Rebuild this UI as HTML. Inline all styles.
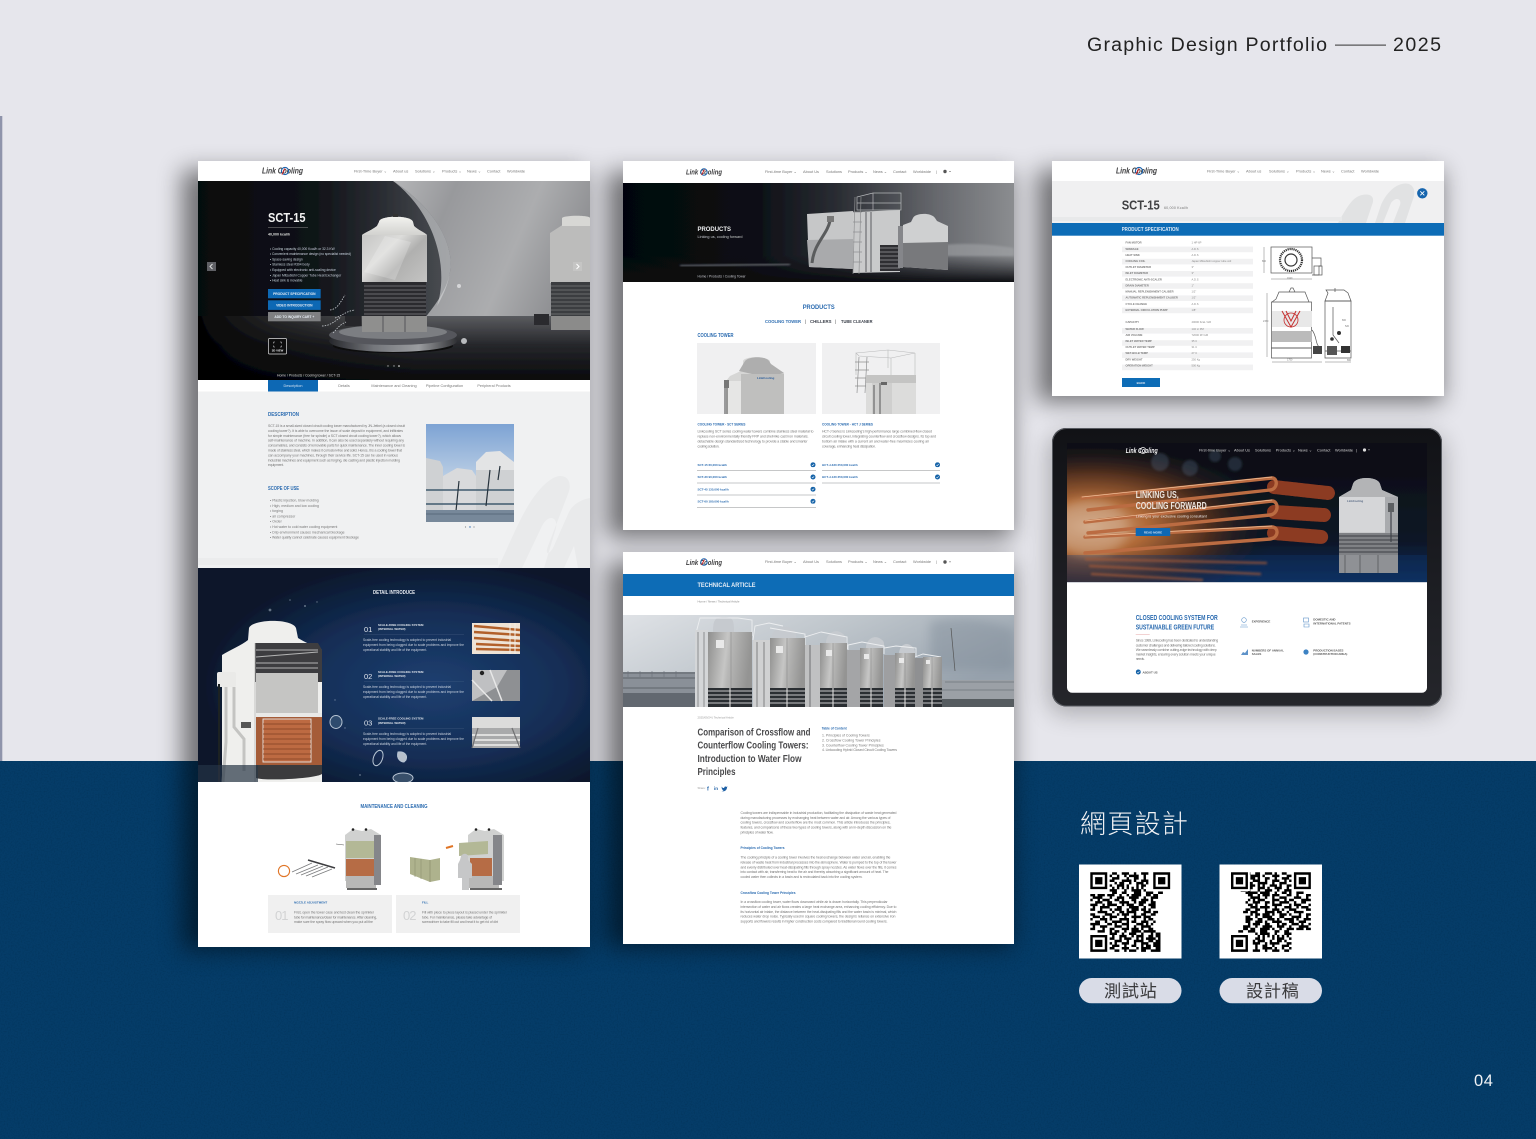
<!DOCTYPE html>
<html lang="zh-Hant">
<head>
<meta charset="utf-8">
<title>Graphic Design Portfolio 2025</title>
<style>
html,body{margin:0;padding:0;background:#e6e6ec;width:1536px;height:1139px;overflow:hidden}
svg{display:block}
text{font-family:"Liberation Sans","Noto Sans CJK TC",sans-serif}
.n{font-family:"Liberation Sans Narrow","Liberation Sans",sans-serif;font-weight:700}
.nav{font-size:3.9px;fill:#777}
.p{font-size:3.5px;fill:#777}
.w{font-size:3.3px;fill:#c9d2de}
.b{fill:#2a6bb0}
</style>
</head>
<body>
<svg width="1536" height="1139" viewBox="0 0 1536 1139" xmlns="http://www.w3.org/2000/svg">
<defs>
<filter id="sh" x="-30%" y="-30%" width="160%" height="160%"><feGaussianBlur stdDeviation="12"/></filter>
<filter id="sm" x="-10%" y="-10%" width="120%" height="120%"><feGaussianBlur stdDeviation="0.35"/></filter>
<filter id="b1" x="-20%" y="-20%" width="140%" height="140%"><feGaussianBlur stdDeviation="1"/></filter>
<filter id="b3" x="-30%" y="-30%" width="160%" height="160%"><feGaussianBlur stdDeviation="5"/></filter>
<filter id="noise" x="0" y="0" width="100%" height="100%"><feTurbulence type="fractalNoise" baseFrequency=".7" numOctaves="2" seed="4"/><feColorMatrix values="0 0 0 0 0  0 0 0 0 0  0 0 0 0 0  0 0 0 1.1 -.52"/></filter>
<linearGradient id="h1" x1="0" x2="1" y1="0" y2="0"><stop offset="0" stop-color="#06080c"/><stop offset=".3" stop-color="#101318"/><stop offset=".48" stop-color="#2c2f35"/><stop offset=".66" stop-color="#4f5257"/><stop offset="1" stop-color="#55585d"/></linearGradient>
<linearGradient id="h1b" x1="0" x2="1" y1="0" y2=".3"><stop offset="0" stop-color="#b5b6b8"/><stop offset=".3" stop-color="#98999c"/><stop offset=".7" stop-color="#acadaf"/><stop offset="1" stop-color="#8f9093"/></linearGradient>
<linearGradient id="fl" x1="0" x2="0" y1="0" y2="1"><stop offset="0" stop-color="#5a5b5f"/><stop offset=".45" stop-color="#26272b"/><stop offset="1" stop-color="#08090c"/></linearGradient>
<linearGradient id="fl2" x1="0" x2="1" y1="0" y2="0"><stop offset="0" stop-color="#000" stop-opacity=".95"/><stop offset=".35" stop-color="#000" stop-opacity=".55"/><stop offset="1" stop-color="#000" stop-opacity="0"/></linearGradient>
<linearGradient id="tw" x1="0" x2="1" y1="0" y2="1"><stop offset="0" stop-color="#bdbdbc"/><stop offset=".45" stop-color="#dcdcda"/><stop offset=".65" stop-color="#b0b0af"/><stop offset="1" stop-color="#c4c4c3"/></linearGradient>
<linearGradient id="cap" x1="0" x2="0" y1="0" y2="1"><stop offset="0" stop-color="#f2f2ef"/><stop offset="1" stop-color="#d2d2cf"/></linearGradient>
<linearGradient id="plat" x1="0" x2="1" y1="0" y2="0"><stop offset="0" stop-color="#26272b"/><stop offset=".35" stop-color="#74767b"/><stop offset=".7" stop-color="#9b9da0"/><stop offset="1" stop-color="#303135"/></linearGradient>
<radialGradient id="blu" cx=".6" cy=".55" r=".6"><stop offset="0" stop-color="#1d3f70"/><stop offset=".55" stop-color="#142e56"/><stop offset="1" stop-color="#091629"/></radialGradient>
<linearGradient id="h2" x1="0" x2="1" y1="0" y2="0"><stop offset="0" stop-color="#04060c"/><stop offset=".32" stop-color="#090c13"/><stop offset=".55" stop-color="#2a2d33"/><stop offset=".8" stop-color="#66686d"/><stop offset="1" stop-color="#8b8d90"/></linearGradient>
<linearGradient id="h2f" x1="0" x2="0" y1="0" y2="1"><stop offset="0" stop-color="#0a0c12" stop-opacity="0"/><stop offset="1" stop-color="#08090d" stop-opacity=".95"/></linearGradient>
<linearGradient id="sky" x1="0" x2="1" y1="0" y2=".5"><stop offset="0" stop-color="#dfe2e6"/><stop offset=".5" stop-color="#bec5cb"/><stop offset="1" stop-color="#97a2ad"/></linearGradient>
<linearGradient id="sky2" x1="0" x2="0" y1="0" y2="1"><stop offset="0" stop-color="#7da3d4"/><stop offset=".6" stop-color="#c0d2e6"/><stop offset="1" stop-color="#e8edf1"/></linearGradient>
<linearGradient id="st" x1="0" x2="1" y1="0" y2=".15"><stop offset="0" stop-color="#8f8f8e"/><stop offset=".45" stop-color="#c6c6c5"/><stop offset=".55" stop-color="#b7b7b6"/><stop offset="1" stop-color="#949493"/></linearGradient>
<radialGradient id="org" cx=".08" cy=".6" r=".62"><stop offset="0" stop-color="#d8b08f"/><stop offset=".3" stop-color="#b06a38"/><stop offset=".62" stop-color="#53301f"/><stop offset="1" stop-color="#10141d" stop-opacity="0"/></radialGradient>
<linearGradient id="tabb" x1="0" x2="0" y1="0" y2="1"><stop offset="0" stop-color="#0c0d12"/><stop offset=".7" stop-color="#0b1626"/><stop offset="1" stop-color="#10305e"/></linearGradient>
<linearGradient id="bez" x1="0" x2="0" y1="0" y2="1"><stop offset="0" stop-color="#111216"/><stop offset=".5" stop-color="#1b1c21"/><stop offset="1" stop-color="#25262b"/></linearGradient>
<clipPath id="c1"><rect x="198" y="181" width="392" height="199"/></clipPath>
<clipPath id="c1d"><rect x="198" y="568" width="392" height="214"/></clipPath>
<clipPath id="c1g"><rect x="198" y="391" width="392" height="177"/></clipPath>
<clipPath id="c2"><rect x="623" y="183" width="391" height="99"/></clipPath>
<clipPath id="c4"><rect x="1052" y="181" width="392" height="42"/></clipPath>
<clipPath id="ct"><path d="M1067 442.7h360v245a5 5 0 0 1-5 5h-350a5 5 0 0 1-5-5z"/></clipPath>
<clipPath id="c3"><rect x="623" y="615" width="391" height="92"/></clipPath>
<path id="qrd" fill="none" stroke="#000" stroke-width="1.03" d="M9 .5h2m2 0h3m2 0h1m2 0h3M8 1.5h1m2 0h1m2 0h1m1 0h4m2 0h1M9 2.5h3m3 0h1m2 0h2m2 0h1M8 3.5h2m3 0h4m1 0h1m2 0h3M10 4.5h1m1 0h2m2 0h1m2 0h3m1 0h1M8 5.5h1m2 0h3m1 0h1m3 0h1m1 0h2M9 6.5h1m1 0h1m1 0h1m1 0h1m1 0h1m1 0h1m1 0h1M8 7.5h3m3 0h1m2 0h4m1 0h1M9 8.5h2m2 0h2m3 0h3m2 0h3m2 0h2M0 9.5h2m1 0h3m1 0h3m2 0h1m2 0h1m1 0h4m2 0h2m1 0h2M1 10.5h4m3 0h1m2 0h3m2 0h4m2 0h1m2 0h3M0 11.5h1m2 0h1m1 0h3m2 0h2m1 0h1m3 0h2m2 0h3m1 0h1M2 12.5h3m2 0h2m3 0h4m2 0h1m1 0h3m2 0h2M0 13.5h3m2 0h1m1 0h4m2 0h1m1 0h3m2 0h2m2 0h3M1 14.5h1m2 0h4m3 0h2m3 0h4m2 0h1m2 0h2M0 15.5h2m2 0h1m3 0h1m1 0h3m2 0h1m1 0h3m1 0h2m1 0h1M3 16.5h4m2 0h1m2 0h2m1 0h4m3 0h3m1 0h2M0 17.5h2m4 0h3m2 0h1m1 0h3m2 0h1m2 0h2m2 0h2M1 18.5h3m1 0h1m2 0h3m3 0h1m2 0h4m1 0h3M0 19.5h1m3 0h3m1 0h1m3 0h4m2 0h1m3 0h1m1 0h2M2 20.5h2m2 0h1m2 0h4m2 0h1m1 0h2m2 0h3m2 0h1M0 21.5h4m3 0h2m1 0h1m2 0h3m3 0h3m1 0h1m1 0h1M1 22.5h1m2 0h3m3 0h3m2 0h1m2 0h1m2 0h4M0 23.5h2m3 0h1m2 0h2m3 0h3m1 0h3m1 0h1m2 0h2M3 24.5h3m2 0h1m1 0h2m2 0h1m2 0h4m1 0h5M8 25.5h3m2 0h1m2 0h3m2 0h1m3 0h1m1 0h2M9 26.5h1m2 0h3m2 0h1m1 0h3m2 0h2m1 0h2M8 27.5h2m2 0h1m1 0h3m2 0h1m1 0h1m1 0h4m1 0h1M10 28.5h3m2 0h1m2 0h4m2 0h2m1 0h2M8 29.5h1m1 0h1m2 0h3m2 0h1m2 0h3m2 0h3M9 30.5h3m2 0h1m2 0h2m2 0h1m1 0h2m1 0h3M8 31.5h2m3 0h3m3 0h1m1 0h4m2 0h2M10 32.5h2m2 0h1m1 0h3m2 0h2m2 0h4"/>
<g id="fnd"><path d="M0 0h7v7h-7zM1 1v5h5v-5z" fill-rule="evenodd"/><rect x="2" y="2" width="3" height="3"/></g>
<symbol id="glyph" viewBox="0 0 10 10"><circle cx="5" cy="5" r="5" fill="#1563a8"/><path d="M2.8 5.2l1.6 1.6 2.9-3.2" fill="none" stroke="#fff" stroke-width="1.1"/></symbol>
</defs>

<!-- background -->
<rect width="1536" height="1139" fill="#e6e6ec"/>
<rect x="0" y="116" width="2.3" height="645" fill="#8f94ab"/>
<rect y="761" width="1536" height="378" fill="#053c68"/>
<rect y="761" width="1536" height="378" filter="url(#noise)" opacity=".22"/>

<!-- header -->
<text x="1087" y="51" font-size="19.6" fill="#222" textLength="240" lengthAdjust="spacing">Graphic Design Portfolio</text>
<rect x="1335" y="44.6" width="51" height="1" fill="#333"/>
<text x="1393" y="51" font-size="19.6" fill="#222" textLength="48" lengthAdjust="spacing">2025</text>

<!-- shadows -->
<g filter="url(#sh)" fill="#000" opacity=".5">
<rect x="182" y="170" width="402" height="780"/>
<rect x="607" y="172" width="405" height="366"/>
<rect x="607" y="562" width="405" height="385"/>
<rect x="1037" y="170" width="405" height="232"/>
</g>
<rect x="1048" y="434" width="396" height="280" rx="16" fill="#000" opacity=".25" filter="url(#sh)"/>

<g filter="url(#sm)">
<!-- ================ PANEL 1 ================ -->
<rect x="198" y="161" width="392" height="786" fill="#fff"/>
<text x="262" y="173.5" font-size="8.6" font-style="italic" font-weight="700" fill="#3a3a3c" textLength="41" lengthAdjust="spacingAndGlyphs">Link Cooling</text>
<circle cx="285" cy="171" r="3.6" fill="none" stroke="#1c64ad" stroke-width="1.1"/><path d="M282 174.5l3-6" stroke="#cf2a2a" stroke-width="1.1"/>
<text x="354" y="172.3" class="nav">First-Time Buyer  ⌄</text><text x="393" y="172.3" class="nav">About us</text><text x="415" y="172.3" class="nav">Solutions ⌄</text><text x="442" y="172.3" class="nav">Products ⌄</text><text x="467" y="172.3" class="nav">News ⌄</text><text x="487" y="172.3" class="nav">Contact</text><text x="507" y="172.3" class="nav">Worldwide</text>

<!-- hero -->
<g clip-path="url(#c1)">
<rect x="198" y="181" width="392" height="199" fill="url(#h1)"/>
<path d="M393 181C430 205 455 240 450 272C447 290 435 305 425 318H590V181Z" fill="url(#h1b)"/>
<path d="M393 181C430 205 455 240 450 272C448 285 443 296 437 306C447 276 440 232 412 199C406 192 400 186 393 181Z" fill="#d3d4d5" opacity=".65"/>
<rect x="198" y="316" width="392" height="64" fill="url(#fl)"/>
<rect x="198" y="316" width="220" height="64" fill="url(#fl2)"/>
<!-- second tower -->
<path d="M567 222c0-6 25-6 25-1l10 12v50h-52v-50z" fill="#bcbcbb"/>
<path d="M562 218c2-3 28-3 28 0v8h-28z" fill="#d7d7d4"/>
<rect x="551" y="282" width="44" height="34" fill="#3b3c3f"/><path d="M551 286h44M551 290h44M551 294h44M551 298h44M551 302h44M551 306h44M551 310h44M551 314h44" stroke="#7a7b7d" stroke-width=".8"/>
<rect x="551" y="316" width="44" height="14" fill="#8b8b8a"/>
<rect x="534" y="314" width="15" height="11" fill="#2b2c2f"/>
<!-- platform -->
<ellipse cx="393" cy="346" rx="60" ry="7" fill="#08090b" opacity=".85"/>
<ellipse cx="393" cy="341" rx="64" ry="11" fill="url(#plat)"/>
<ellipse cx="393" cy="335" rx="64" ry="10" fill="#54565b"/>
<ellipse cx="393" cy="332" rx="54" ry="7" fill="#7c7e82"/>
<!-- main tower -->
<path d="M379 222C379 215 412 215 413 222L414 226C418 230 424 232 427 235V282H362V235C366 232 372 230 377 226Z" fill="url(#tw)"/>
<path d="M379 222C379 215 412 215 413 222L414 226C418 230 424 232 427 235H362C366 232 372 230 377 226Z" fill="url(#cap)"/>
<path d="M385 236l26 6-16 38-31-8z" fill="#fff" opacity=".2"/>
<rect x="393" y="214" width="5" height="3" fill="#333"/>
<rect x="364" y="282" width="62" height="34" fill="#2b2c2f"/>
<path d="M364 286h62M364 290h62M364 294h62M364 298h62M364 302h62M364 306h62M364 310h62M364 314h62" stroke="#6a6b6d" stroke-width=".9"/>
<rect x="362" y="316" width="65" height="16" fill="#8f8f8e"/>
<path d="M383 316v16M405 316v16" stroke="#55555a" stroke-width="1"/>
<rect x="345" y="316" width="16" height="10" fill="#26272a"/>
<!-- splash -->
<path d="M330 310c8-1 11-9 15-15M335 318c7-2 11-7 20-8M322 326c8 0 13-5 19-9M333 333c4-4 6-8 13-11" stroke="#c9cdd2" stroke-width=".8" fill="none" stroke-dasharray="1.5 1.2"/>
<circle cx="459" cy="286" r="2" fill="#d5d6d8"/>
<circle cx="464" cy="341" r="3" fill="#b8babd"/>
<path d="M207 262h9v9h-9z" fill="#5f6165"/><path d="M212.5 264l-2.5 2.5 2.5 2.5" stroke="#ddd" fill="none" stroke-width="1"/>
<path d="M573 262h9v9h-9z" fill="#d8d8d8" opacity=".35"/><path d="M576.5 264l2.5 2.5-2.5 2.5" stroke="#fff" fill="none" stroke-width="1"/>
</g>
<text class="n" x="268" y="222" font-size="13" fill="#f2f2f2" textLength="37.5" lengthAdjust="spacingAndGlyphs">SCT-15</text>
<rect x="268" y="227" width="40" height=".6" fill="#777"/>
<text x="268" y="235.5" font-size="3.6" font-weight="700" fill="#ddd">40,000 kcal/h</text>
<text x="270" y="249.8" class="w">•  Cooling capacity 40,000 Kcal/h or 32.3 KW</text>
<text x="270" y="255.1" class="w" textLength="81">•  Convenient maintenance design (no specialist needed)</text>
<text x="270" y="260.4" class="w">•  Space-saving design</text>
<text x="270" y="265.7" class="w">•  Stainless steel #304 body</text>
<text x="270" y="271" class="w">•  Equipped with electronic anti-scaling device</text>
<text x="270" y="276.3" class="w">•  Japan Mitsubishi Copper Tube Heat Exchanger</text>
<text x="270" y="281.6" class="w">•  Heat sink is movable</text>
<rect x="268" y="289" width="52.7" height="9.3" fill="#0f68b4"/><text x="294.3" y="295" font-size="3.3" font-weight="700" fill="#e8eef5" text-anchor="middle">PRODUCT SPECIFICATION</text>
<rect x="268" y="300.3" width="52.7" height="9.6" fill="#0f68b4"/><text x="294.3" y="306.5" font-size="3.3" font-weight="700" fill="#e8eef5" text-anchor="middle">VIDEO INTRODUCTION</text>
<rect x="268" y="312" width="52.7" height="9.3" fill="#7f8082"/><text x="294.3" y="318" font-size="3.3" font-weight="700" fill="#e8eef5" text-anchor="middle">ADD TO INQUIRY CART +</text>
<rect x="268.5" y="338.5" width="18" height="15.5" rx="1" fill="#08090c" stroke="#ddd" stroke-width=".7"/>
<path d="M275 342h-1.5v1.5M280 342h1.5v1.5M275 347h-1.5v-1.5M280 347h1.5v-1.5" stroke="#ddd" fill="none" stroke-width=".5"/>
<text x="277.5" y="351.7" font-size="2.8" font-weight="700" fill="#eee" text-anchor="middle">3D VIEW</text>
<circle cx="388" cy="366" r=".7" fill="#aaa"/><circle cx="394" cy="366" r=".7" fill="#aaa"/><circle cx="399" cy="366" r=".8" fill="#fff"/>
<text x="277" y="376.3" font-size="3.4" fill="#ddd">Home / Products / Cooling tower / SCT-15</text>

<!-- tabs -->
<rect x="198" y="380" width="392" height="11.5" fill="#fff"/>
<rect x="268" y="380" width="50" height="11.5" fill="#0f68b4"/>
<text x="293" y="387" fill="#cfe0f0" font-size="3.8" text-anchor="middle">Description</text>
<text x="344" y="387" font-size="3.8" fill="#777" text-anchor="middle">Details</text>
<text x="394" y="387" font-size="3.8" fill="#777" text-anchor="middle">Maintenance and Cleaning</text>
<text x="444.5" y="387" font-size="3.8" fill="#777" text-anchor="middle">Pipeline Configuration</text>
<text x="494" y="387" font-size="3.8" fill="#777" text-anchor="middle">Peripheral Products</text>

<!-- description -->
<rect x="198" y="391.5" width="392" height="176.5" fill="#f0f1f2"/>
<g clip-path="url(#c1g)">
<path d="M498 568c18-38 30-72 52-88 14-10 24 0 18 14l-20 52c-3 8 0 10 5 2l16-36c6-12 21-14 21-14v70h-12l-4-22-10 22h-20l12-40c2-12-8-14-14-2l-20 42z" fill="#e9eaeb"/>
<rect x="198" y="558" width="300" height="7" fill="#ebeced"/>
</g>
<text class="n b" x="268" y="416" font-size="5.2" textLength="31" lengthAdjust="spacingAndGlyphs">DESCRIPTION</text>
<text x="268" y="427" class="p" textLength="137">SCT-15 is a small-sized closed circuit cooling tower manufactured by JN-Jetbel (a closed circuit</text>
<text x="268" y="431.9" class="p" textLength="135">cooling tower?). It is able to overcome the issue of scale deposit in equipment, and infiltrates</text>
<text x="268" y="436.8" class="p" textLength="133">for simple maintenance (free for spindle) a SCT closed circuit cooling tower?), which allows</text>
<text x="268" y="441.7" class="p" textLength="136">self-maintenance of machine. In addition, it can also be used separately without requiring any</text>
<text x="268" y="446.6" class="p" textLength="137">consumables, and consists of removable parts for quick maintenance. The inner cooling tower is</text>
<text x="268" y="451.5" class="p" textLength="134">made of stainless steel, which makes it corrosion-free and solid. Hence, it is a cooling tower that</text>
<text x="268" y="456.4" class="p" textLength="130">can accompany your machines, through their service life. SCT-15 can be used in various</text>
<text x="268" y="461.3" class="p" textLength="132">industrial machines and equipment such as forging, die casting and plastic injection molding</text>
<text x="268" y="466.2" class="p" textLength="16">equipment.</text>
<text class="n b" x="268" y="490" font-size="5.2" textLength="31" lengthAdjust="spacingAndGlyphs">SCOPE OF USE</text>
<text x="270" y="501.5" class="p">•  Plastic injection, blow molding</text>
<text x="270" y="506.8" class="p">•  High, medium and low cooling</text>
<text x="270" y="512.1" class="p">•  forging</text>
<text x="270" y="517.4" class="p">•  air compressor</text>
<text x="270" y="522.7" class="p">•  Oxder</text>
<text x="270" y="528" class="p">•  Hot water to cold water cooling equipment</text>
<text x="270" y="533.3" class="p">•  Drip environment causes mechanical blockage</text>
<text x="270" y="538.6" class="p" textLength="89">•  Water quality cannot celebrate causes equipment blockage</text>
<rect x="426" y="424" width="88" height="98" fill="url(#sky2)"/>
<path d="M426 458l14 3 3 6v55h-17z" fill="#cfd1d3"/>
<path d="M443 476l14-8 15 2 4 6v46h-33z" fill="#d9dadc"/>
<path d="M476 462l10-10 14-1 10 8 4 3v60h-38z" fill="#e3e4e5"/><path d="M476 470h38v52h-38z" fill="#cfd1d3"/>
<path d="M426 490h88M426 504h88" stroke="#3f5a6e" stroke-width="1.4"/>
<path d="M459 481l-3 30M490 470l-4 36M500 466l-2 14" stroke="#27333c" stroke-width="1.2"/>
<rect x="426" y="510" width="88" height="12" fill="#77889a"/><path d="M426 514h88" stroke="#3f4e5c" stroke-width=".6"/>
<circle cx="465.5" cy="527" r=".6" fill="#888"/><circle cx="470" cy="527" r=".7" fill="#2a6bb0"/><circle cx="474" cy="527" r=".6" fill="#888"/>

<!-- dark blue -->
<rect x="198" y="568" width="392" height="214" fill="url(#blu)"/>
<g clip-path="url(#c1d)">
<path d="M249 628C252 619 292 618 296 628L298 638C304 642 316 647 322 650V782H222V655C230 650 242 645 248 640Z" fill="#efefed"/>
<path d="M255 643h63l4 7v32h-67z" fill="#3d3e41"/>
<path d="M256 650h62M256 657l62-5M256 663h62M256 668h62" stroke="#b4b4b4" stroke-width="1.1"/>
<rect x="256" y="673" width="62" height="40" fill="#c5c5c3"/>
<rect x="256" y="713" width="66" height="4" fill="#e9e9e7"/>
<rect x="256" y="717" width="66" height="48" fill="#a55b38"/>
<rect x="263" y="719" width="48" height="43" fill="#bd6b43" stroke="#e7e7e5" stroke-width=".9"/>
<path d="M263 724h48M263 729h48M263 734h48M263 739h48M263 744h48M263 749h48M263 754h48M263 759h48" stroke="#7f4226" stroke-width=".8"/>
<path d="M256 765h66v9c-8 5-58 7-66 4z" fill="#3a3b3d"/>
<path d="M255 643v139" stroke="#b8b8b6" stroke-width=".8"/>
<rect x="217" y="672" width="19" height="15" rx="2" fill="#eaeae8"/>
<path d="M226 687v55l-3 40M234 687v40l10 12v32" stroke="#c4c4c2" stroke-width="3" fill="none"/><path d="M219 684v98" stroke="#1f2024" stroke-width="2"/>
<rect x="241" y="722" width="10" height="6" fill="#555"/>
<rect x="198" y="765" width="60" height="17" fill="#2a3645" opacity=".7"/>
<g fill="none" stroke="#b8c5d4" stroke-width="1"><ellipse cx="336" cy="722" rx="6" ry="6.5" fill="#2d4c6e"/><ellipse cx="378" cy="758" rx="4.5" ry="8" transform="rotate(20 378 758)"/><path d="M398 752c6-1 10 3 8 8l-2 2c-3 0-8-3-6-10z" fill="#b7c0cb"/><ellipse cx="403" cy="778" rx="10" ry="5" fill="#38506b"/></g>
<g fill="#cfd9e5" opacity=".45"><circle cx="270" cy="610" r="1.4"/><circle cx="290" cy="600" r=".8"/><circle cx="305" cy="606" r="1"/><circle cx="317" cy="602" r=".7"/><circle cx="335" cy="700" r=".7"/><circle cx="345" cy="728" r=".7"/><circle cx="360" cy="775" r=".9"/></g>
</g>
<text class="n" x="394" y="594" font-size="5.4" fill="#e8edf3" text-anchor="middle" textLength="42" lengthAdjust="spacingAndGlyphs">DETAIL INTRODUCE</text>
<text x="364" y="632" font-size="7.5" fill="#dfe5ec">01</text>
<text x="378" y="625.8" font-size="2.9" font-weight="700" fill="#e3e8ee">SCALE-FREE COOLING SYSTEM</text>
<text x="378" y="630.2" font-size="2.9" font-weight="700" fill="#e3e8ee">(INTERNAL WATER)</text>
<rect x="364" y="634.5" width="100" height=".3" fill="#4a6386"/>
<text x="363" y="641" class="w" textLength="88">Scale-free cooling technology is adopted to prevent industrial</text>
<text x="363" y="646" class="w" textLength="101">equipment from being clogged due to scale problems and improve the</text>
<text x="363" y="651" class="w" textLength="64">operational stability and life of the equipment.</text>
<text x="364" y="679" font-size="7.5" fill="#dfe5ec">02</text>
<text x="378" y="672.8" font-size="2.9" font-weight="700" fill="#e3e8ee">SCALE-FREE COOLING SYSTEM</text>
<text x="378" y="677.2" font-size="2.9" font-weight="700" fill="#e3e8ee">(INTERNAL WATER)</text>
<rect x="364" y="681.5" width="100" height=".3" fill="#4a6386"/>
<text x="363" y="688" class="w" textLength="88">Scale-free cooling technology is adopted to prevent industrial</text>
<text x="363" y="693" class="w" textLength="101">equipment from being clogged due to scale problems and improve the</text>
<text x="363" y="698" class="w" textLength="64">operational stability and life of the equipment.</text>
<text x="364" y="725.5" font-size="7.5" fill="#dfe5ec">03</text>
<text x="378" y="719.5" font-size="2.9" font-weight="700" fill="#e3e8ee">SCALE-FREE COOLING SYSTEM</text>
<text x="378" y="724" font-size="2.9" font-weight="700" fill="#e3e8ee">(INTERNAL WATER)</text>
<rect x="364" y="728" width="100" height=".3" fill="#4a6386"/>
<text x="363" y="735" class="w" textLength="88">Scale-free cooling technology is adopted to prevent industrial</text>
<text x="363" y="740" class="w" textLength="101">equipment from being clogged due to scale problems and improve the</text>
<text x="363" y="745" class="w" textLength="64">operational stability and life of the equipment.</text>
<rect x="472" y="623" width="48" height="31" fill="#eee3d6"/>
<g stroke="#b2602b" stroke-width="2.4"><path d="M474 626l46 4M474 632l46 3M474 638l46 3M476 644l44 2M476 649l44 1"/></g><path d="M510 623v31M515 623v31" stroke="#f2eee6" stroke-width="1"/>
<rect x="472" y="670" width="48" height="31" fill="#bfc0c2"/><path d="M472 701l25-14 10-17h13v31z" fill="#8e9093"/><path d="M472 680l20 21M490 670l12 31" stroke="#e7e7e7" stroke-width="1.5"/><circle cx="482" cy="673" r="2.2" fill="#222"/>
<rect x="472" y="717" width="48" height="31" fill="#a9aaab"/><rect x="472" y="717" width="48" height="11" fill="#dcdcdb"/><path d="M472 735h48M474 740h46M474 745h46" stroke="#f0f0ee" stroke-width="1.6"/><path d="M478 728l-6 20M512 728l8 20" stroke="#6f7072" stroke-width="1.2"/>

<!-- maintenance -->
<text class="n b" x="394" y="808" font-size="5.3" text-anchor="middle" textLength="67" lengthAdjust="spacingAndGlyphs">MAINTENANCE AND CLEANING</text>
<g transform="translate(343,827)">
<path d="M2 8l8-6 9 2 9-2 10 6v46H2z" fill="#d0d1d0"/><rect x="3" y="14" width="28" height="17" fill="#b3b896"/><rect x="3" y="32" width="28" height="17" fill="#b66c44"/><rect x="3" y="49" width="30" height="12" fill="#b8b8b7"/><rect x="31" y="8" width="7" height="50" fill="#85868a"/><circle cx="10" cy="2.5" r="1.3" fill="#222"/><circle cx="23" cy="2.5" r="1.3" fill="#222"/><path d="M4 62h30" stroke="#333" stroke-width="1.6"/>
</g>
<path d="M292 872l20-9M296 874l22-9M301 875l22-9M306 876l22-9M312 877l20-8" stroke="#7c7d7f" stroke-width=".9"/><path d="M308 860l27 8" stroke="#3c3d40" stroke-width="1.6"/>
<circle cx="284" cy="871" r="5.6" fill="none" stroke="#e07427" stroke-width="1.1"/>
<path d="M336 844l8 1" stroke="#555" stroke-width=".6"/>
<g transform="translate(466,827)">
<path d="M2 8l8-6 9 2 9-2 10 6v46H2z" fill="#d0d1d0"/><rect x="4" y="31" width="22" height="18" fill="#b66c44"/><rect x="3" y="49" width="30" height="12" fill="#b8b8b7"/><rect x="27" y="8" width="9" height="50" fill="#85868a"/><circle cx="10" cy="2.5" r="1.3" fill="#222"/><circle cx="23" cy="2.5" r="1.3" fill="#222"/><path d="M4 62h32" stroke="#333" stroke-width="1.6"/>
</g>
<path d="M459 843l29-2v13l-29 2z" fill="#b3b896"/>
<path d="M410 857l20 3 10-2v22l-10 2-20-8z" fill="#aeb28d"/><path d="M430 860v22" stroke="#8e926f" stroke-width=".8"/><path d="M415 858v19M421 859v20" stroke="#8e926f" stroke-width=".6"/>
<path d="M446 848l7-2" stroke="#e07427" stroke-width="2"/>
<path d="M461 856c2-3 6-3 7 0v4l4 4v14h-3v12h-7v-12h-4v-14l2-4z" fill="#c6c7c8"/>
<rect x="268" y="895" width="124" height="38" fill="#f0f0f0"/><rect x="396" y="895" width="124" height="38" fill="#f0f0f0"/>
<text x="275" y="920" font-size="13" fill="#d2d3d4" textLength="13.5">01</text>
<text x="403" y="920" font-size="13" fill="#d2d3d4" textLength="13.5">02</text>
<text x="294" y="903.3" font-size="3" font-weight="700" fill="#2a6bb0">NOZZLE ADJUSTMENT</text>
<text x="422" y="903.3" font-size="3" font-weight="700" fill="#2a6bb0">FILL</text>
<text x="294" y="913.4" class="p" textLength="80">First, open the tower case and test clean the sprinkler</text>
<text x="294" y="918.3" class="p" textLength="83">tube for maintenance/clean for maintenance. After cleaning,</text>
<text x="294" y="923.2" class="p" textLength="79">make sure the spray flow upward when you put all the</text>
<text x="422" y="913.4" class="p" textLength="85">Fill with piece to piece layout is placed under the sprinkler</text>
<text x="422" y="918.3" class="p" textLength="70">tube. For maintenance, please take advantage of</text>
<text x="422" y="923.2" class="p" textLength="76">screwdriver to take fill out and heat it to get rid of dirt</text>

<!-- ================ PANEL 2 ================ -->
<rect x="623" y="161" width="391" height="369" fill="#fff"/>
<text x="686" y="174.5" font-size="7.6" font-style="italic" font-weight="700" fill="#3a3a3c" textLength="36" lengthAdjust="spacingAndGlyphs">Link Cooling</text>
<circle cx="704" cy="172" r="3.2" fill="none" stroke="#1c64ad" stroke-width="1"/><path d="M701.5 175l3-5.5" stroke="#cf2a2a" stroke-width="1"/>
<text x="765" y="172.8" class="nav">First-time Buyer ⌄</text><text x="803" y="172.8" class="nav">About Us</text><text x="826" y="172.8" class="nav">Solutions</text><text x="848" y="172.8" class="nav">Products ⌄</text><text x="873" y="172.8" class="nav">News ⌄</text><text x="893" y="172.8" class="nav">Contact</text><text x="913" y="172.8" class="nav">Worldwide</text><text x="936" y="172.8" class="nav">|</text><circle cx="945" cy="171.5" r="1.7" fill="#555"/><path d="M949 171l1 1 1-1z" fill="#555"/>
<g clip-path="url(#c2)">
<rect x="623" y="183" width="391" height="99" fill="url(#h2)"/>
<rect x="623" y="255" width="391" height="27" fill="url(#h2f)"/>
<path d="M680 266l110-2" stroke="#8e9196" stroke-width="2" filter="url(#b1)" fill="none" opacity=".7"/>
<path d="M935 246c25-4 55-2 79 2v8h-79z" fill="#a5a7aa" opacity=".55" filter="url(#b1)"/>
<!-- left unit -->
<path d="M807 214l46-3v58l-44-2z" fill="#c6c7c8"/><path d="M807 240l46-1v30l-44-2z" fill="#a9aaac"/>
<path d="M830 221c-3 14-16 22-18 42" stroke="#5a5b5d" stroke-width="3" fill="none"/><rect x="827" y="216" width="7" height="6" fill="#777"/>
<!-- cage -->
<g fill="none" stroke="#b4b6b8" stroke-width=".7"><path d="M857 197l16-4h28v17h-44zM873 193v17M857 203h44"/></g>
<!-- center -->
<path d="M853 212l47-2v62l-47 1z" fill="#c9cacb"/>
<path d="M855 197l-2 77M861 197l-2 77M853 212h9M853 222h9M853 232h9M853 242h9M853 252h9M853 262h9" stroke="#8f9092" stroke-width=".7"/>
<path d="M866 212v60M871 212v60" stroke="#5a5c60" stroke-width="1"/>
<rect x="880" y="245" width="20" height="26" fill="#2d2e31"/><path d="M880 248h20M880 252h20M880 256h20M880 260h20M880 264h20M880 268h20" stroke="#9a9b9e" stroke-width=".8"/>
<!-- right unit -->
<path d="M913 218c2-5 18-6 22 0l2 3 11 5v44l-45-3v-42l8-3z" fill="#cfd0d1"/><path d="M903 243l45-1v28l-45-3z" fill="#78797c"/><rect x="898" y="226" width="5" height="42" fill="#85868a"/>
</g>
<text class="n" x="697.5" y="231" font-size="6" fill="#eee" textLength="33.5" lengthAdjust="spacingAndGlyphs">PRODUCTS</text>
<text x="697.5" y="237.8" font-size="3.8" fill="#ccc">Linking us, cooling forward</text>
<text x="697.5" y="277.5" font-size="3.3" fill="#ccc">Home / Products / Cooling Tower</text>
<text class="n b" x="818.7" y="309" font-size="6" text-anchor="middle" textLength="32" lengthAdjust="spacingAndGlyphs">PRODUCTS</text>
<text class="n b" x="765" y="323" font-size="4.3" textLength="36" lengthAdjust="spacingAndGlyphs">COOLING TOWER</text>
<text x="805" y="323" font-size="4.3" fill="#444">|</text>
<text class="n" x="810" y="323" font-size="4.3" fill="#3a3f4a" textLength="21.5" lengthAdjust="spacingAndGlyphs">CHILLERS</text>
<text x="835" y="323" font-size="4.3" fill="#444">|</text>
<text class="n" x="841" y="323" font-size="4.3" fill="#3a3f4a" textLength="31.5" lengthAdjust="spacingAndGlyphs">TUBE CLEANER</text>
<text class="n b" x="697.5" y="337.2" font-size="5" textLength="36" lengthAdjust="spacingAndGlyphs">COOLING TOWER</text>
<rect x="697" y="343" width="119" height="71" fill="#f0f0f1"/><rect x="822" y="343" width="118" height="71" fill="#f0f0f1"/>
<path d="M743 361c1-5 24-5 27 0v3l14 9v41h-58v-33l4-5 13-6z" fill="#d6d6d5"/><path d="M745 361c4-5 21-5 24 0l2 3 13 9-12 3-20-2-13-3z" fill="#aeaeae"/>
<rect x="741" y="374" width="43" height="40" fill="#bfbfbe"/><rect x="726" y="381" width="15" height="33" fill="#e6e6e5"/>
<text x="757" y="379" font-size="3" font-weight="700" fill="#2a5c9a">LinkCooling</text>
<rect x="724" y="380" width="5" height="8" fill="#777"/><path d="M725 388v26M727 388v26" stroke="#444" stroke-width="1"/>
<g stroke="#b8b9ba" fill="none" stroke-width=".6"><path d="M856 353l32-3 27 3-24 5-32-2zM856 353v22M888 350v18M915 353v22M891 358v18"/></g>
<path d="M857 393l2-36M865 393l2-36M855 362h14M855 370h14M855 378h14M855 386h14" stroke="#8e8f90" stroke-width=".7"/>
<path d="M866 375h22l28 1v38h-50z" fill="#dcdcdb"/><path d="M866 375h50v8h-50z" fill="#c4c4c3"/><rect x="872" y="383" width="20" height="31" fill="#cfcfce"/><path d="M874 385v29M880 383v31" stroke="#555" stroke-width="1"/><rect x="881" y="382" width="6" height="3" fill="#666"/>
<text class="n b" x="697.5" y="425.6" font-size="3.6" textLength="48" lengthAdjust="spacingAndGlyphs">COOLING TOWER - SCT SERIES</text>
<text class="n b" x="822" y="425.6" font-size="3.6" textLength="51" lengthAdjust="spacingAndGlyphs">COOLING TOWER - HCT J SERIES</text>
<text x="697.5" y="432.5" class="p" textLength="116">Linkcooling SCT series cooling water towers combine stainless steel material to</text>
<text x="697.5" y="437.6" class="p" textLength="111">replace non-environmentally friendly FRP and shell-like cast iron materials.</text>
<text x="697.5" y="442.5" class="p" textLength="110">detachable design standardized technology to provide a stable and smarter</text>
<text x="697.5" y="447.5" class="p" textLength="22">cooling solution.</text>
<text x="822" y="432.5" class="p" textLength="110">HCT-J Series is Linkcooling's high-performance large combined-flow closed</text>
<text x="822" y="437.6" class="p" textLength="114">circuit cooling tower, integrating counterflow and crossflow designs. Its top and</text>
<text x="822" y="442.5" class="p" textLength="107">bottom air intake with a current air and water-free maximizes cooling air</text>
<text x="822" y="447.5" class="p" textLength="54">coverage, enhancing heat dissipation.</text>
<g font-size="3" font-weight="700" fill="#2a6bb0">
<text x="697.5" y="466">SCT-15    60,000 kcal/h</text><text x="697.5" y="478">SCT-30    90,000 kcal/h</text><text x="697.5" y="490.3">SCT-45    135,000 kcal/h</text><text x="697.5" y="502.5">SCT-60    180,000 kcal/h</text>
<text x="822" y="466">HCT-J-330    250,000 kcal/h</text><text x="822" y="478">HCT-J-130    350,000 kcal/h</text>
</g>
<path d="M697 470.5h119M697 483h119M697 495h119M697 507.5h119M822 470.5h118M822 483h118" stroke="#b4b5b7" stroke-width=".7"/>
<use href="#glyph" x="810.5" y="462.3" width="5" height="5"/><use href="#glyph" x="810.5" y="474.5" width="5" height="5"/><use href="#glyph" x="810.5" y="486.7" width="5" height="5"/><use href="#glyph" x="810.5" y="498.8" width="5" height="5"/><use href="#glyph" x="935" y="462.3" width="5" height="5"/><use href="#glyph" x="935" y="474.5" width="5" height="5"/>

<!-- ================ PANEL 3 ================ -->
<rect x="623" y="552" width="391" height="392" fill="#fff"/>
<text x="686" y="564.8" font-size="7.6" font-style="italic" font-weight="700" fill="#3a3a3c" textLength="36" lengthAdjust="spacingAndGlyphs">Link Cooling</text>
<circle cx="704" cy="562" r="3.2" fill="none" stroke="#1c64ad" stroke-width="1"/><path d="M701.5 565l3-5.5" stroke="#cf2a2a" stroke-width="1"/>
<text x="765" y="563.2" class="nav">First-time Buyer ⌄</text><text x="803" y="563.2" class="nav">About Us</text><text x="826" y="563.2" class="nav">Solutions</text><text x="848" y="563.2" class="nav">Products ⌄</text><text x="873" y="563.2" class="nav">News ⌄</text><text x="893" y="563.2" class="nav">Contact</text><text x="913" y="563.2" class="nav">Worldwide</text><text x="936" y="563.2" class="nav">|</text><circle cx="945" cy="562" r="1.7" fill="#555"/><path d="M949 561.5l1 1 1-1z" fill="#555"/>
<rect x="623" y="574" width="391" height="22" fill="#0f6cb6"/>
<text class="n" x="697.5" y="587" font-size="6.4" fill="#e6eef6" textLength="58" lengthAdjust="spacingAndGlyphs">TECHNICAL ARTICLE</text>
<text x="697.5" y="602.4" font-size="3" fill="#888">Home  /  News  /  Technical Article</text>
<g clip-path="url(#c3)">
<rect x="623" y="615" width="391" height="92" fill="url(#sky)"/>
<path d="M930 622c30-8 60-2 84 8v40h-84z" fill="#7c8895" opacity=".4" filter="url(#b3)"/>
<!-- background structures -->
<rect x="623" y="672" width="80" height="35" fill="#8a9098"/>
<path d="M623 673h72M623 678h72M623 688h72" stroke="#5e646b" stroke-width=".9"/>
<path d="M628 671v6M640 671v6M652 671v6M664 671v6M676 671v6" stroke="#6a7078" stroke-width=".6"/>
<rect x="623" y="693" width="72" height="14" fill="#62686f"/>
<rect x="940" y="680" width="74" height="27" fill="#9ba0a6"/><rect x="940" y="699" width="74" height="8" fill="#575b61"/><path d="M945 682h69M940 690h74" stroke="#70757b" stroke-width=".7"/>
<!-- fan shrouds -->
<g fill="#c6cacf"><path d="M713 632c0-12 2-15 11-15s10 3 10 15z"/><path d="M772 638c0-9 10-14 18-10s6 6 6 10z"/><path d="M826 643c0-9 8-14 14-11s6 6 6 11z"/><path d="M866 648c0-8 7-13 13-10s5 5 5 10z"/><path d="M899 654c0-8 6-12 11-9s5 5 5 9z"/></g>
<g fill="none" stroke="#eceef0" stroke-width=".9"><path d="M696 633l4-15h38l14 2v16M753 640l2-14 14-3 14 3M770 628l35 6v10M805 645v-8l16-5M821 632l26 5v12M848 653v-8l14-3 22 4v8M884 654v-6l12-2 20 2v9M915 657l8-3 18 3"/></g>
<!-- towers -->
<rect x="695" y="630" width="13" height="77" fill="#d4d6d8"/><path d="M698 632v75M704 632v75" stroke="#8c8e90" stroke-width="1"/>
<rect x="708" y="632" width="44" height="56" fill="url(#st)"/>
<rect x="753" y="640" width="17" height="67" fill="#d0d1d2"/><path d="M757 642v65M764 642v65" stroke="#7f8183" stroke-width="1"/>
<rect x="770" y="638" width="35" height="50" fill="url(#st)"/>
<rect x="805" y="645" width="15" height="62" fill="#c0c1c2"/><path d="M810 645v62" stroke="#6e7072" stroke-width="1"/>
<rect x="820" y="643" width="27" height="45" fill="url(#st)"/>
<rect x="847" y="650" width="13" height="57" fill="#a4a5a7"/>
<rect x="860" y="648" width="23" height="40" fill="url(#st)"/>
<rect x="884" y="655" width="11" height="52" fill="#9e9fa1"/>
<rect x="895" y="653" width="20" height="35" fill="url(#st)"/>
<rect x="915" y="658" width="8" height="49" fill="#8f9092"/>
<rect x="923" y="657" width="19" height="31" fill="url(#st)"/>
<!-- louvers -->
<rect x="708" y="688" width="44" height="19" fill="#2c2d30"/><rect x="770" y="688" width="35" height="19" fill="#2c2d30"/><rect x="820" y="688" width="27" height="19" fill="#2c2d30"/><rect x="860" y="688" width="23" height="19" fill="#2c2d30"/><rect x="895" y="688" width="20" height="19" fill="#2c2d30"/><rect x="923" y="688" width="19" height="19" fill="#2c2d30"/>
<path d="M708 691h44M708 695h44M708 699h44M708 703h44M770 691h35M770 695h35M770 699h35M770 703h35M820 691h27M820 695h27M820 699h27M820 703h27M860 691h23M860 695h23M860 699h23M860 703h23M895 691h20M895 695h20M895 699h20M895 703h20M923 691h19M923 695h19M923 699h19M923 703h19" stroke="#c6c7c8" stroke-width="1"/>
<path d="M730 688v19M787 688v19M833 688v19M871 688v19M905 688v19M932 688v19" stroke="#dcdcdc" stroke-width="1.1"/>
<path d="M731 632v56M787 638v50M833 643v45M871 648v40M905 653v35M932 657v31" stroke="#8a8a8a" stroke-width=".6"/>
<g fill="#e9e9e9"><rect x="716" y="640" width="8" height="8"/><rect x="776" y="646" width="7" height="7"/><rect x="826" y="650" width="6" height="6"/><rect x="864" y="654" width="5" height="5"/><rect x="899" y="658" width="5" height="5"/><rect x="926" y="660" width="4" height="4"/></g>
<path d="M951 628l4 43" stroke="#555" stroke-width=".7"/>
</g>
<text x="697.5" y="718.3" font-size="2.8" fill="#999">2025/09/24   |   Technical Article</text>
<text class="n" x="697.5" y="735.3" font-size="10" fill="#4a4a4c" textLength="113" lengthAdjust="spacingAndGlyphs">Comparison of Crossflow and</text>
<text class="n" x="697.5" y="748.6" font-size="10" fill="#4a4a4c" textLength="111" lengthAdjust="spacingAndGlyphs">Counterflow Cooling Towers:</text>
<text class="n" x="697.5" y="761.9" font-size="10" fill="#4a4a4c" textLength="104" lengthAdjust="spacingAndGlyphs">Introduction to Water Flow</text>
<text class="n" x="697.5" y="775.2" font-size="10" fill="#4a4a4c" textLength="38" lengthAdjust="spacingAndGlyphs">Principles</text>
<text class="n b" x="821.7" y="729.3" font-size="3.8" textLength="25" lengthAdjust="spacingAndGlyphs">Table of Content</text>
<text x="822" y="736.3" class="p">1.  Principles of Cooling Towers</text>
<text x="822" y="741.3" class="p">2.  Crossflow Cooling Tower Principles</text>
<text x="822" y="746.3" class="p">3.  Counterflow Cooling Tower Principles</text>
<text x="822" y="751.2" class="p" textLength="75">4.  Linkcooling Hybrid Closed Circuit Cooling Towers</text>
<text x="697.5" y="789.2" font-size="2.8" fill="#999">Share:</text>
<text x="707" y="790.3" font-size="5.5" font-weight="700" fill="#1d5fa5">f</text><text x="714" y="790" font-size="4.5" font-weight="700" fill="#1d5fa5">in</text>
<path d="M721 786.6c1.2 1 2.4 1.5 3.2 1.4-.2-1.3 1.4-2 2.2-1.1l1.2-.4-.6 1c-.1 2.5-2.4 4.8-5.6 3.5 1 0 1.7-.3 2.1-.8-1-.1-1.7-.9-2.1-3.6z" fill="#1d5fa5"/>
<text x="740.5" y="814" class="p" textLength="156">Cooling towers are indispensable in industrial production, facilitating the dissipation of waste heat generated</text>
<text x="740.5" y="818.9" class="p" textLength="150">during manufacturing processes by exchanging heat between water and air. Among the various types of</text>
<text x="740.5" y="823.7" class="p" textLength="150">cooling towers, crossflow and counterflow are the most common. This article introduces the principles,</text>
<text x="740.5" y="828.6" class="p" textLength="151">features, and comparisons of these two types of cooling towers, along with an in-depth discussion on the</text>
<text x="740.5" y="833.5" class="p" textLength="33">principles of water flow.</text>
<text x="740.5" y="858.6" class="p" textLength="150">The cooling principle of a cooling tower involves the heat exchange between water and air, enabling the</text>
<text x="740.5" y="863.5" class="p" textLength="156">release of waste heat from industrial processes into the atmosphere. Water is pumped to the top of the tower</text>
<text x="740.5" y="868.3" class="p" textLength="156">and evenly distributed over heat-dissipating fills through spray nozzles. As water flows over the fills, it comes</text>
<text x="740.5" y="873.2" class="p" textLength="148">into contact with air, transferring heat to the air and thereby absorbing a significant amount of heat. The</text>
<text x="740.5" y="878" class="p" textLength="122">cooled water then collects in a basin and is recirculated back into the cooling system.</text>
<text x="740.5" y="903" class="p" textLength="147">In a crossflow cooling tower, water flows downward while air is drawn horizontally. This perpendicular</text>
<text x="740.5" y="907.9" class="p" textLength="156">intersection of water and air flows creates a large heat exchange area, enhancing cooling efficiency. Due to</text>
<text x="740.5" y="912.8" class="p" textLength="156">its horizontal air intake, the distance between the heat-dissipating fills and the water basin is minimal, which</text>
<text x="740.5" y="917.7" class="p" textLength="155">reduces water drop noise. Typically used in square cooling towers, the design's reliance on extensive iron</text>
<text x="740.5" y="922.6" class="p" textLength="147">supports and flowers results in higher construction costs compared to traditional round cooling towers.</text>
<text class="n b" x="740.5" y="849.2" font-size="4" textLength="44" lengthAdjust="spacingAndGlyphs">Principles of Cooling Towers</text>
<text class="n b" x="740.5" y="893.8" font-size="4" textLength="55" lengthAdjust="spacingAndGlyphs">Crossflow Cooling Tower Principles</text>

<!-- ================ PANEL 4 ================ -->
<rect x="1052" y="161" width="392" height="235" fill="#fff"/>
<text x="1116" y="173.5" font-size="8.4" font-style="italic" font-weight="700" fill="#3a3a3c" textLength="41" lengthAdjust="spacingAndGlyphs">Link Cooling</text>
<circle cx="1139" cy="171" r="3.6" fill="none" stroke="#1c64ad" stroke-width="1.1"/><path d="M1136 174.5l3-6" stroke="#cf2a2a" stroke-width="1.1"/>
<text x="1207" y="172.3" class="nav">First-Time Buyer ⌄</text><text x="1246" y="172.3" class="nav">About us</text><text x="1269" y="172.3" class="nav">Solutions ⌄</text><text x="1296" y="172.3" class="nav">Products ⌄</text><text x="1321" y="172.3" class="nav">News ⌄</text><text x="1341" y="172.3" class="nav">Contact</text><text x="1361" y="172.3" class="nav">Worldwide</text>
<rect x="1052" y="181" width="392" height="42" fill="#f0f0f1"/>
<g clip-path="url(#c4)"><path d="M1338 223c8-14 14-26 24-28s13 3 10 10l-6 18h9l6-18c6-14 18-24 28-21 7 3 6 11 3 18l-7 21h-12l7-18c2-6-4-9-9-2l-8 20h-45z" fill="#e1e2e3"/><rect x="1052" y="217" width="290" height="4" fill="#e8e9ea"/></g>
<text class="n" x="1121.7" y="209.7" font-size="13" fill="#3f4043" textLength="38" lengthAdjust="spacingAndGlyphs">SCT-15</text>
<text x="1164" y="209" font-size="3.6" fill="#777" textLength="24">60,000 Kcal/h</text>
<circle cx="1422.3" cy="193.3" r="5.2" fill="#1665ae"/><path d="M1420.3 191.3l4 4M1424.3 191.3l-4 4" stroke="#fff" stroke-width=".8"/>
<rect x="1052" y="223" width="392" height="12.7" fill="#0f6cb6"/>
<text class="n" x="1121.7" y="231" font-size="5" fill="#dfeaf5" textLength="57" lengthAdjust="spacingAndGlyphs">PRODUCT SPECIFICATION</text>
<g fill="#f1f1f2">
<rect x="1122" y="246.6" width="131" height="5.6"/><rect x="1122" y="258.8" width="131" height="5.6"/><rect x="1122" y="271" width="131" height="5.6"/><rect x="1122" y="283.2" width="131" height="5.6"/><rect x="1122" y="295.4" width="131" height="5.6"/><rect x="1122" y="307.6" width="131" height="5.6"/>
<rect x="1122" y="328" width="131" height="5.6"/><rect x="1122" y="340.2" width="131" height="5.6"/><rect x="1122" y="352.4" width="131" height="5.6"/><rect x="1122" y="364.6" width="131" height="5.6"/>
</g>
<g font-size="2.7" font-weight="700" fill="#777">
<text x="1125.5" y="243.7">FAN MOTOR</text><text x="1125.5" y="249.8">WINDAGE</text><text x="1125.5" y="256">HEAT SINK</text><text x="1125.5" y="262">COOLING COIL</text><text x="1125.5" y="268.2">OUTLET DIAMETER</text><text x="1125.5" y="274.2">INLET DIAMETER</text><text x="1125.5" y="280.3">ELECTRONIC ANTI-SCALER</text><text x="1125.5" y="286.4">DRAIN DIAMETER</text><text x="1125.5" y="292.6">MANUAL REPLENISHMENT CALIBER</text><text x="1125.5" y="298.7">AUTOMATIC REPLENISHMENT CALIBER</text><text x="1125.5" y="304.8">CYCLE CHANGE</text><text x="1125.5" y="310.9">EXTERNAL CIRCULATION PUMP</text>
<text x="1125.5" y="323">CAPACITY</text><text x="1125.5" y="329.9">WATER FLOW</text><text x="1125.5" y="335.8">AIR VOLUME</text><text x="1125.5" y="341.9">INLET WATER TEMP</text><text x="1125.5" y="348">OUTLET WATER TEMP</text><text x="1125.5" y="354.2">WET-BULB TEMP</text><text x="1125.5" y="360.3">DRY WEIGHT</text><text x="1125.5" y="366.4">OPERATION WEIGHT</text>
</g>
<g font-size="2.7" fill="#888">
<text x="1191.5" y="243.7">1 HP 6P</text><text x="1191.5" y="249.8">A.D.S</text><text x="1191.5" y="256">A.D.S</text><text x="1191.5" y="262">Japan Mitsubishi copper tube coil</text><text x="1191.5" y="268.2">3"</text><text x="1191.5" y="274.2">3"</text><text x="1191.5" y="280.3">A.D.S</text><text x="1191.5" y="286.4">1"</text><text x="1191.5" y="292.6">1/2"</text><text x="1191.5" y="298.7">1/2"</text><text x="1191.5" y="304.8">A.D.S</text><text x="1191.5" y="310.9">1/8"</text>
<text x="1191.5" y="323">40000 Kcal / HR</text><text x="1191.5" y="329.9">132 L/ PM</text><text x="1191.5" y="335.8">72000 M³/ HR</text><text x="1191.5" y="341.9">35 C</text><text x="1191.5" y="348">31 C</text><text x="1191.5" y="354.2">27 C</text><text x="1191.5" y="360.3">250 Kg</text><text x="1191.5" y="366.4">500 Kg</text>
</g>
<g fill="none" stroke="#555" stroke-width=".7">
<rect x="1271" y="247" width="41" height="26"/>
<circle cx="1291" cy="260" r="11" stroke-width="2.2" stroke="#333" stroke-dasharray="1.2 .8"/>
<circle cx="1291" cy="260" r="6" stroke-width="1.2" stroke="#333"/>
<path d="M1312 258h9v8h-2v9h-7"/><rect x="1314" y="266" width="8" height="9"/>
<path d="M1271 279h41M1264 247v26" stroke-width=".4"/>
<path d="M1291 288l-2 4h6l-2-4zM1279 292h26l4 10H1272l4-3zM1271.5 302h40v46h-40z"/>
<path d="M1271.5 348h40v10h-40z"/>
<path d="M1326 290h18l4 3 3 8h-26l3-8zM1335 292v-4"/>
<path d="M1325 301h26v50h-26zM1325 351h26v7h-26z"/>
<path d="M1272 362h50M1325 362h26M1267 293v64" stroke-width=".4"/>
<path d="M1312 330c5 6 3 14 8 18M1333 307v28l6 8"/>
</g>
<rect x="1272" y="311" width="40" height="16" fill="#e8e8e8"/>
<rect x="1272" y="331" width="40" height="11" fill="#bbb"/>
<path d="M1282 311l9 16 9-16M1286 311l5 10 5-10" stroke="#c62f2f" stroke-width="1" fill="none"/><circle cx="1291" cy="320" r="7" fill="none" stroke="#c62f2f" stroke-width=".8"/>
<rect x="1313" y="346" width="9" height="8" fill="#444"/>
<rect x="1327" y="346" width="10" height="9" fill="#555"/><rect x="1341" y="346" width="9" height="7" fill="#333"/><circle cx="1339" cy="333" r="2" fill="#333"/><circle cx="1332" cy="339" r="1.8" fill="#333"/>
<g font-size="2.4" fill="#777"><text x="1287" y="279">1640</text><text x="1262" y="262">860</text><text x="1263" y="322">2150</text><text x="1287" y="360.5">1750</text><text x="1342" y="321">800</text><text x="1345" y="327">520</text><text x="1347" y="361">860</text></g>
<rect x="1122" y="378" width="38" height="9" fill="#0f6cb6"/><text x="1141" y="384" font-size="3" font-weight="700" fill="#e8eef6" text-anchor="middle">BACK</text>
</g>

<!-- ================ TABLET ================ -->
<rect x="1052" y="428" width="390" height="278.5" rx="14" fill="url(#bez)"/>
<rect x="1052.5" y="428.5" width="389" height="277.5" rx="14" fill="none" stroke="#575a60" stroke-width="1"/>
<g clip-path="url(#ct)" filter="url(#sm)">
<rect x="1067" y="442.7" width="360" height="139.5" fill="url(#tabb)"/>
<rect x="1067" y="442.7" width="300" height="139.5" fill="url(#org)"/>
<rect x="1067" y="555" width="360" height="28" fill="#123267" opacity=".4"/>
<g fill="#7f9fc2" opacity=".2" filter="url(#b1)"><circle cx="1160" cy="462" r="9"/><circle cx="1190" cy="468" r="8"/><circle cx="1235" cy="464" r="7"/><circle cx="1215" cy="456" r="6"/></g>
<ellipse cx="1090" cy="528" rx="38" ry="28" fill="#cfa889" opacity=".55" filter="url(#b3)"/>
<!-- coils -->
<g fill="none" stroke-linecap="round">
<g stroke="#8c3a22" stroke-width="14" stroke-dasharray="2.2 1.9"><path d="M1274 487l54 6"/><path d="M1274 512l50 3"/><path d="M1274 533l48 4"/></g>
<g stroke="#bb6c42" stroke-width="3.4">
<path d="M1082 498L1272 478C1278 478 1278 489 1270 490L1088 510"/>
<path d="M1085 522L1272 501C1279 501 1279 514 1270 515L1088 533"/>
<path d="M1085 537L1272 527C1279 527 1279 538 1270 539L1085 553"/>
</g>
<g stroke="#efc09a" stroke-width=".7"><path d="M1082 497L1272 477M1085 521L1272 500M1085 536L1272 526"/></g>
<g stroke="#a35a38" stroke-width="2.4" opacity=".7" filter="url(#b1)"><path d="M1086 559l180 4M1090 566l170 8M1092 574l110 6"/></g>
</g>
<!-- tablet tower -->
<path d="M1353 484C1355 476 1378 476 1380 484L1382 490 1398 497V568L1339 566V497L1351 490Z" fill="#c9cacc"/>
<path d="M1353 484C1355 476 1378 476 1380 484L1382 490 1398 497H1339L1351 490Z" fill="#b3b4b6"/>
<path d="M1385 497h13v70h-13z" fill="#a9abae"/>
<rect x="1339" y="497" width="46" height="35" fill="#d5d6d8"/>
<rect x="1339" y="533" width="59" height="22" fill="#7f8185"/>
<path d="M1339 536h59M1339 540h59M1339 544h59M1339 548h59M1339 552h59" stroke="#3e4044" stroke-width="1"/>
<rect x="1339" y="555" width="59" height="18" fill="#8f9195"/><path d="M1345 555v18M1360 555v18M1378 555v18" stroke="#55575a" stroke-width=".8"/>
<rect x="1388" y="503" width="6" height="9" fill="#5c5e62"/><path d="M1391 512v30" stroke="#40424a" stroke-width="1.2"/>
<text x="1347" y="502" font-size="2.8" font-weight="700" fill="#596a85">LinkCooling</text>
<rect x="1067" y="582.2" width="360" height="111" fill="#fff"/>
</g>
<g filter="url(#sm)">
<text x="1125.7" y="453" font-size="7.4" font-style="italic" font-weight="700" fill="#f0f0f0" textLength="32" lengthAdjust="spacingAndGlyphs">Link Cooling</text>
<circle cx="1143" cy="450.5" r="3" fill="none" stroke="#eee" stroke-width=".8"/>
<g font-size="3.9" fill="#d5d5d5">
<text x="1199" y="451.3">First-time Buyer ⌄</text><text x="1234" y="451.3">About Us</text><text x="1255" y="451.3">Solutions</text><text x="1275.7" y="451.3">Products ⌄</text><text x="1298" y="451.3">News ⌄</text><text x="1317" y="451.3">Contact</text><text x="1335" y="451.3">Worldwide</text><text x="1356" y="451.3">|</text>
</g>
<circle cx="1364.5" cy="450" r="1.6" fill="#ddd"/><path d="M1368 449.5l1 1 1-1z" fill="#ddd"/>
<text class="n" x="1135.7" y="498" font-size="10" fill="#ece6e0" textLength="43" lengthAdjust="spacingAndGlyphs" font-weight="400">LINKING US,</text>
<text class="n" x="1135.7" y="509" font-size="10" fill="#ece6e0" textLength="71" lengthAdjust="spacingAndGlyphs" font-weight="400">COOLING FORWARD</text>
<text x="1135.7" y="517.3" font-size="3.6" fill="#eee" textLength="71">Linking is your exclusive cooling consultant</text>
<rect x="1135.7" y="528" width="34.5" height="8" fill="#0f68b4"/><text x="1153" y="533.3" font-size="3" font-weight="700" fill="#cfe0f0" text-anchor="middle">READ MORE</text>
<text class="n b" x="1135.7" y="620" font-size="7.4" textLength="82" lengthAdjust="spacingAndGlyphs">CLOSED COOLING SYSTEM FOR</text>
<text class="n b" x="1135.7" y="629.3" font-size="7.4" textLength="78.5" lengthAdjust="spacingAndGlyphs">SUSTAINABLE GREEN FUTURE</text>
<rect x="1135.7" y="634.5" width="14" height=".5" fill="#e4a6a6"/>
<text x="1135.7" y="641.7" class="p" textLength="82.5">Since 1989, Linkcooling has been dedicated to understanding</text>
<text x="1135.7" y="646.3" class="p" textLength="80">customer challenges and delivering tailored cooling solutions.</text>
<text x="1135.7" y="650.8" class="p" textLength="81">We seamlessly combine cutting-edge technology with deep</text>
<text x="1135.7" y="655.5" class="p" textLength="80">market insights, ensuring every solution meets your unique</text>
<text x="1135.7" y="660" class="p" textLength="9">needs.</text>
<use href="#glyph" x="1135.8" y="669.5" width="5" height="5"/>
<text x="1142.5" y="673.4" font-size="2.9" font-weight="700" fill="#555">ABOUT US</text>
<g fill="none" stroke="#5f93c9" stroke-width=".6"><circle cx="1244" cy="620" r="2.3"/><path d="M1241 625h6M1240 627h8"/><rect x="1303.5" y="618" width="5" height="4"/><path d="M1304 624h5v3h-5z"/></g>
<path d="M1241 655l2-3 2 1 3-4v6z" fill="#5f93c9"/><circle cx="1306" cy="652" r="2.6" fill="#3e82c3"/>
<text x="1251.7" y="622.5" font-size="2.9" font-weight="700" fill="#555">EXPERIENCE</text>
<text x="1313.3" y="620.7" font-size="2.9" font-weight="700" fill="#555">DOMESTIC AND</text>
<text x="1313.3" y="624.4" font-size="2.9" font-weight="700" fill="#555">INTERNATIONAL PATENTS</text>
<text x="1251.7" y="651.4" font-size="2.9" font-weight="700" fill="#555">NUMBERS OF ANNUAL</text>
<text x="1251.7" y="655.2" font-size="2.9" font-weight="700" fill="#555">SALES</text>
<text x="1313.3" y="651.4" font-size="2.9" font-weight="700" fill="#555">PRODUCTION BASES</text>
<text x="1313.3" y="655.2" font-size="2.9" font-weight="700" fill="#555">(CONSTRUCTION AREA)</text>
</g>

<!-- ================ RIGHT BOTTOM ================ -->
<text x="1080" y="833" font-size="26" fill="#f2f2f4" font-weight="300" letter-spacing="1.3">網頁設計</text>
<rect x="1079" y="864.5" width="102.5" height="94" fill="#fff"/>
<rect x="1219.5" y="864.5" width="102.5" height="94" fill="#fff"/>
<g transform="translate(1090.3 872.3) scale(2.42 2.41)">
<use href="#qrd"/>
<rect x="-.2" y="-.2" width="8" height="8" fill="#fff"/><rect x="25.2" y="-.2" width="8" height="8" fill="#fff"/><rect x="-.2" y="25.2" width="8" height="8" fill="#fff"/>
<use href="#fnd"/><use href="#fnd" x="26"/><use href="#fnd" y="26"/>
</g>
<g transform="translate(1231 872.3) scale(2.42 2.41)">
<use href="#qrd" transform="rotate(180 16.5 16.5)"/>
<rect x="-.2" y="-.2" width="8" height="8" fill="#fff"/><rect x="25.2" y="-.2" width="8" height="8" fill="#fff"/><rect x="-.2" y="25.2" width="8" height="8" fill="#fff"/>
<use href="#fnd"/><use href="#fnd" x="26"/><use href="#fnd" y="26"/>
</g>
<rect x="1079" y="978" width="102.5" height="25.3" rx="12.6" fill="#d9dce7"/>
<rect x="1219.5" y="978" width="102.5" height="25.3" rx="12.6" fill="#d9dce7"/>
<text x="1104" y="997" font-size="17.2" fill="#3a3a3c" letter-spacing=".6">測試站</text>
<text x="1246" y="997" font-size="17.2" fill="#3a3a3c" letter-spacing=".6">設計稿</text>
<text x="1474" y="1086" font-size="16.5" fill="#f0f2f5" letter-spacing=".6">04</text>
</svg>
</body>
</html>
